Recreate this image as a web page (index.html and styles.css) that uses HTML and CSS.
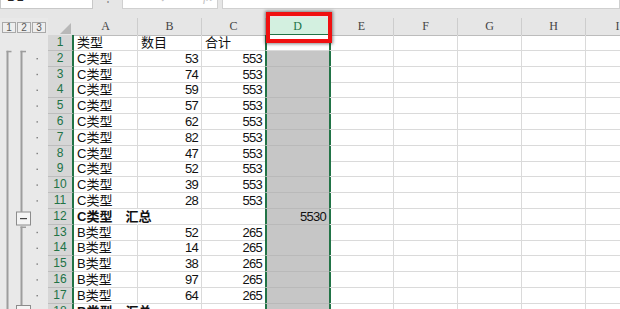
FILE: index.html
```html
<!DOCTYPE html>
<html>
<head>
<meta charset="utf-8">
<link rel="stylesheet" href="styles.css">
</head>
<body>
<div class="app">
  <div class="fbar">
    <div class="fbar-inner">
      <div class="namebox">D1</div>
      <div class="sep">⋮</div>
      <div class="fxbox"><span>✕</span><span>✓</span><span class="fx">fx</span></div>
      <div class="formula"></div>
    </div>
  </div>
  <div class="sheet">
    <div class="outline">
      <div class="levels"><span>1</span><span>2</span><span>3</span></div>
      <svg class="brackets" width="48" height="274" viewBox="0 0 48 274">
        <g fill="#9d9d9d">
          <rect x="6.5" y="15.8" width="2" height="260"/>
          <rect x="6.5" y="15.8" width="5" height="1.5"/>
          <rect x="20.5" y="15.8" width="2" height="161"/>
          <rect x="20.5" y="15.8" width="5.5" height="1.5"/>
          <rect x="20.5" y="191.5" width="2" height="79"/>
          <rect x="20.5" y="191.5" width="5.5" height="1.5"/>
        </g>
        <g fill="#7a7a7a">
          <rect x="36.5" y="23" width="1.4" height="1.4"/>
          <rect x="36.5" y="38.8" width="1.4" height="1.4"/>
          <rect x="36.5" y="54.6" width="1.4" height="1.4"/>
          <rect x="36.5" y="70.4" width="1.4" height="1.4"/>
          <rect x="36.5" y="86.2" width="1.4" height="1.4"/>
          <rect x="36.5" y="102" width="1.4" height="1.4"/>
          <rect x="36.5" y="117.8" width="1.4" height="1.4"/>
          <rect x="36.5" y="133.6" width="1.4" height="1.4"/>
          <rect x="36.5" y="149.4" width="1.4" height="1.4"/>
          <rect x="36.5" y="165.2" width="1.4" height="1.4"/>
          <rect x="36.5" y="196.8" width="1.4" height="1.4"/>
          <rect x="36.5" y="212.6" width="1.4" height="1.4"/>
          <rect x="36.5" y="228.4" width="1.4" height="1.4"/>
          <rect x="36.5" y="244.2" width="1.4" height="1.4"/>
          <rect x="36.5" y="260" width="1.4" height="1.4"/>
        </g>
        <g>
          <rect x="16.5" y="177" width="14" height="13" fill="#f4f4f4" stroke="#8c8c8c"/>
          <rect x="20" y="183" width="7" height="1.2" fill="#444"/>
          <rect x="16.5" y="270.5" width="14" height="13" fill="#f4f4f4" stroke="#8c8c8c"/>
          <rect x="20" y="276.5" width="7" height="1.2" fill="#444"/>
        </g>
      </svg>
    </div>
    <div class="grid">
      <div class="row hdr">
        <div class="corner"><svg width="11" height="11" viewBox="0 0 11 11"><polygon points="11,0 11,11 0,11" fill="#b8b8b8"/></svg></div>
        <div>A</div><div>B</div><div>C</div><div class="hsel">D</div><div>E</div><div>F</div><div>G</div><div>H</div><div>I</div>
      </div>
      <div class="row"><div class="rh">1</div><div>类型</div><div>数目</div><div>合计</div><div class="act"></div><div></div><div></div><div></div><div></div><div></div></div>
      <div class="row"><div class="rh">2</div><div>C类型</div><div class="n">53</div><div class="n">553</div><div></div><div></div><div></div><div></div><div></div><div></div></div>
      <div class="row"><div class="rh">3</div><div>C类型</div><div class="n">74</div><div class="n">553</div><div></div><div></div><div></div><div></div><div></div><div></div></div>
      <div class="row"><div class="rh">4</div><div>C类型</div><div class="n">59</div><div class="n">553</div><div></div><div></div><div></div><div></div><div></div><div></div></div>
      <div class="row"><div class="rh">5</div><div>C类型</div><div class="n">57</div><div class="n">553</div><div></div><div></div><div></div><div></div><div></div><div></div></div>
      <div class="row"><div class="rh">6</div><div>C类型</div><div class="n">62</div><div class="n">553</div><div></div><div></div><div></div><div></div><div></div><div></div></div>
      <div class="row"><div class="rh">7</div><div>C类型</div><div class="n">82</div><div class="n">553</div><div></div><div></div><div></div><div></div><div></div><div></div></div>
      <div class="row"><div class="rh">8</div><div>C类型</div><div class="n">47</div><div class="n">553</div><div></div><div></div><div></div><div></div><div></div><div></div></div>
      <div class="row"><div class="rh">9</div><div>C类型</div><div class="n">52</div><div class="n">553</div><div></div><div></div><div></div><div></div><div></div><div></div></div>
      <div class="row"><div class="rh">10</div><div>C类型</div><div class="n">39</div><div class="n">553</div><div></div><div></div><div></div><div></div><div></div><div></div></div>
      <div class="row"><div class="rh">11</div><div>C类型</div><div class="n">28</div><div class="n">553</div><div></div><div></div><div></div><div></div><div></div><div></div></div>
      <div class="row"><div class="rh">12</div><div class="sum">C类型　汇总</div><div></div><div></div><div class="n">5530</div><div></div><div></div><div></div><div></div><div></div></div>
      <div class="row"><div class="rh">13</div><div>B类型</div><div class="n">52</div><div class="n">265</div><div></div><div></div><div></div><div></div><div></div><div></div></div>
      <div class="row"><div class="rh">14</div><div>B类型</div><div class="n">14</div><div class="n">265</div><div></div><div></div><div></div><div></div><div></div><div></div></div>
      <div class="row"><div class="rh">15</div><div>B类型</div><div class="n">38</div><div class="n">265</div><div></div><div></div><div></div><div></div><div></div><div></div></div>
      <div class="row"><div class="rh">16</div><div>B类型</div><div class="n">97</div><div class="n">265</div><div></div><div></div><div></div><div></div><div></div><div></div></div>
      <div class="row"><div class="rh">17</div><div>B类型</div><div class="n">64</div><div class="n">265</div><div></div><div></div><div></div><div></div><div></div><div></div></div>
      <div class="row"><div class="rh">18</div><div class="sum">B类型　汇总</div><div></div><div></div><div></div><div></div><div></div><div></div><div></div><div></div></div>
    </div>
  </div>
  <div class="callout"></div>
</div>
</body>
</html>
```

FILE: styles.css
```css
* { box-sizing: border-box; margin: 0; padding: 0; }
html, body { margin: 0; }
body {
  width: 620px;
  height: 309px;
  overflow: hidden;
  background: #e6e6e6;
  font-family: "Liberation Sans", "Noto Sans CJK SC", sans-serif;
}
.app {
  position: relative;
  width: 620px;
  height: 309px;
  overflow: hidden;
  background: #e6e6e6;
}
.fbar {
  height: 18px;
  overflow: hidden;
}
.fbar-inner {
  display: flex;
  height: 21px;
  margin-top: -12px;
}
.namebox {
  width: 93px;
  background: #fff;
  border: 1px solid #c8c8c8;
  border-top: none;
  font-size: 13px;
  line-height: 18px;
  padding-left: 6px;
  color: #222;
  overflow: hidden;
}
.sep {
  width: 29px;
  text-align: center;
  color: #8a8a8a;
  font-size: 12px;
  line-height: 18px;
}
.fxbox {
  width: 96px;
  background: #fff;
  border: 1px solid #d0d0d0;
  border-top: none;
  display: flex;
  gap: 14px;
  padding-left: 12px;
  color: #c4c4c4;
  font-size: 13px;
  line-height: 18px;
  overflow: hidden;
}
.fxbox .fx { margin-left: 20px; font-style: italic; font-family: "Liberation Serif", serif; }
.formula {
  flex: 1;
  margin-left: 4px;
  background: #fff;
  border: 1px solid #d0d0d0;
  border-top: none;
}
.sheet {
  display: flex;
  height: 291px;
}
.outline {
  width: 48px;
  flex: none;
  background: #e9e9e9;
}
.levels {
  height: 17px;
  display: flex;
  gap: 1px;
  padding: 4px 0 0 2px;
}
.levels span {
  width: 14px;
  height: 11px;
  border: 1px solid #a9a9a9;
  background: #eeeeee;
  color: #5a5a5a;
  font-size: 10px;
  line-height: 9px;
  text-align: center;
}
.brackets { display: block; }
.grid {
  flex: 1;
  background: #fff;
  overflow: hidden;
}
.row {
  display: grid;
  grid-template-columns: 26px repeat(9, 64px);
  height: 15.8px;
}
.row > div {
  border-right: 1px solid #dadada;
  border-bottom: 1px solid #dadada;
  font-size: 13px;
  line-height: 15px;
  padding: 0 3px;
  white-space: nowrap;
  color: #111;
}
.row.hdr {
  height: 17px;
  background: #e6e6e6;
}
.row.hdr > div {
  background: #e6e6e6;
  border-right: 1px solid #cdcdcd;
  border-bottom: 1px solid #bcbcbc;
  text-align: center;
  font-family: "Liberation Serif", serif;
  font-size: 12px;
  line-height: 16px;
  color: #444;
}
.row.hdr > .corner {
  border-right: 2px solid #e6e6e6;
  display: flex;
  align-items: flex-end;
  justify-content: flex-end;
  padding: 0 1px 1px 0;
}
.corner svg { display: block; }
.row.hdr > .hsel {
  background: #d3f0e0;
  color: #217346;
  border-bottom: 2px solid #217346;
}
.row > .rh {
  background: #d6d6d6;
  color: #217346;
  border-right: 2px solid #217346;
  border-bottom: 1px solid #bdbdbd;
  text-align: center;
  font-size: 12px;
  padding: 0;
}
.row:not(.hdr) > :nth-child(4) { border-right-color: #217346; }
.row:not(.hdr) > :nth-child(5) {
  background: #c6c6c6;
  border-right-color: #217346;
  border-bottom-color: #b9b9b9;
  box-shadow: inset 1px 0 #217346;
}
.row:not(.hdr) > :nth-child(5).act { background: #fff; border-bottom-color: #dadada; }
.row:not(.hdr) > :nth-child(6) { box-shadow: inset 1px 0 #217346; }
.row > .n {
  text-align: right;
  letter-spacing: -0.7px;
  padding-right: 3px;
}
.row > .sum {
  font-weight: bold;
  border-right-color: transparent;
  position: relative;
  z-index: 1;
}
.callout {
  position: absolute;
  left: 266px;
  top: 12px;
  width: 66px;
  height: 31px;
  border: 4px solid #f01010;
  box-shadow: 0 0 3px 1px rgba(40, 40, 40, 0.55);
}
```
